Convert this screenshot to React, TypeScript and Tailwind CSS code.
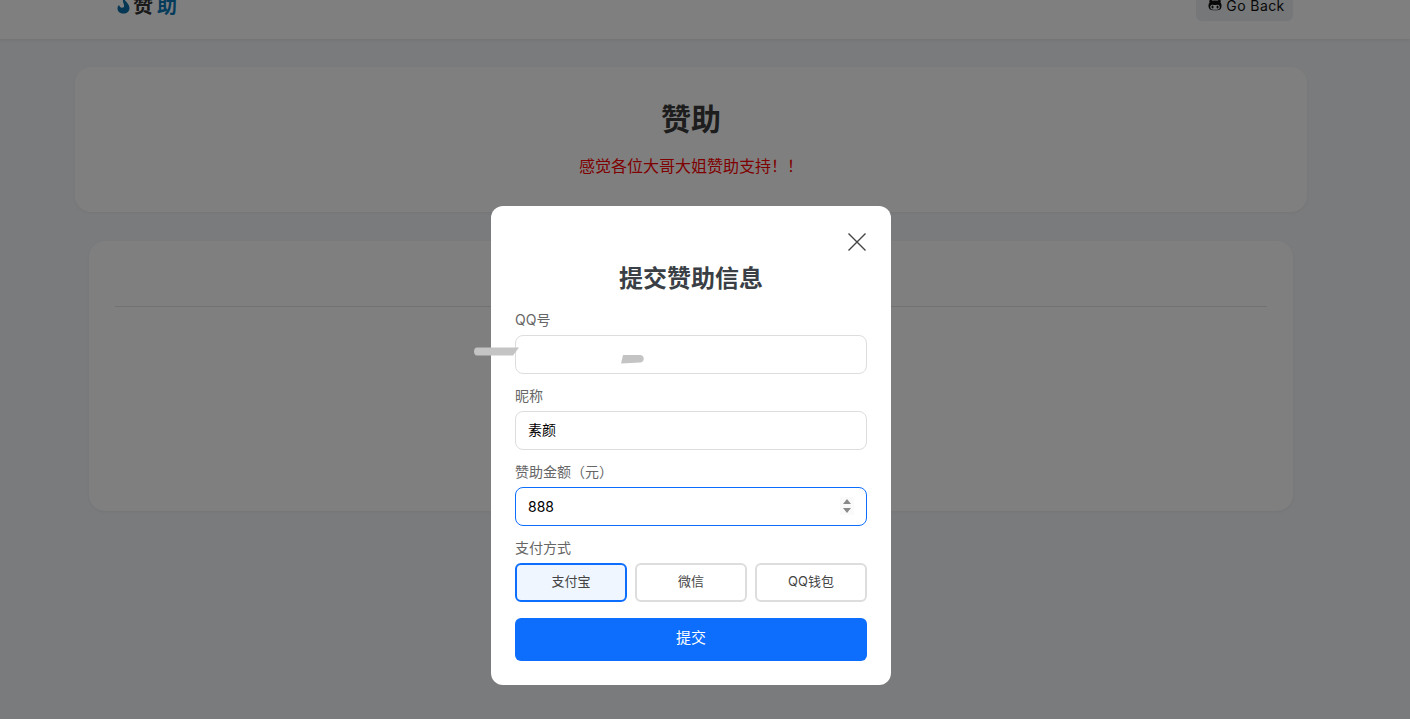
import React from 'react';
import { FaGithubAlt } from 'react-icons/fa';

const cjk = "font-['Inter','Noto_Sans_CJK_SC',sans-serif]";

const Field: React.FC<{ label: string; children: React.ReactNode }> = ({ label, children }) => (
  <div className="mb-3">
    <label className="mb-[6px] block text-[14px] leading-[19px] text-[#666]">{label}</label>
    {children}
  </div>
);

const App: React.FC = () => {
  const methods = ['支付宝', '微信', 'QQ钱包'];

  return (
    <div className={`relative h-screen overflow-hidden bg-[#f4f6fa] ${cjk}`}>
      {/* page behind the dialog, scrolled a little */}
      <nav className="-mt-[33px] flex h-[72px] items-center justify-between bg-white pl-[117px] pr-[117px] shadow-[0_1px_4px_rgba(0,0,0,0.08)]">
        <div className="flex items-center pt-[5px]">
          <svg width="13" height="16" viewBox="0 0 13 16">
            <path d="M6 0 C8 3 12.500 6 12.500 10 C12.500 13.500 10 15.500 6.500 15.500 C3 15.500 0.500 13.500 0.500 10.500 C0.500 9 1 8 2 7 C2.500 8.500 3.500 9.800 5.200 9.800 C6.800 9.800 7.300 8.500 7 7 C6.500 5 5.500 3 6 0 Z" fill="#0a6fa8" />
          </svg>
          <span className="ml-[3px] text-[20px] font-bold tracking-[4px] text-[#333]">赞</span>
          <span className="text-[20px] font-bold text-[#0a78b8]">助</span>
        </div>
        <button className="flex h-[36px] w-[97px] items-center justify-center gap-1 rounded-md bg-[#eceef0] pt-1 pl-1 text-[14px] tracking-[0.4px] text-[#111]">
          <FaGithubAlt className="text-[14px]" />
          Go Back
        </button>
      </nav>

      <main className="pt-[28px] pr-[28px]">
        <section className="mx-[75px] flex h-[145px] flex-col items-center rounded-2xl bg-white pt-[30px] shadow-[0_1px_3px_rgba(0,0,0,0.05)]">
          <h1 className="text-[30px] leading-[45px] font-bold text-[#3a3a3a]">赞助</h1>
          <p className="mt-[12px] text-[16px] leading-[24px] text-[#ff0000]">感觉各位大哥大姐赞助支持！！</p>
        </section>
        <section className="mx-[89px] mt-[29px] h-[270px] rounded-2xl bg-white px-[26px] pt-[65px] shadow-[0_1px_3px_rgba(0,0,0,0.05)]">
          <div className="h-px bg-[#e5e5e5]" />
        </section>
      </main>

      {/* overlay */}
      <div className="absolute inset-0 flex justify-center bg-black/50 pt-[206px] pr-[28px]">
        <div className="relative h-[479px] w-[400px] rounded-xl bg-white px-6 pt-[27px]">
          <div className="flex justify-end pr-px">
            <svg width="18" height="18" viewBox="0 0 18 18" fill="none" stroke="#444" strokeWidth="1.400">
              <path d="M0.500 0.500 L17.500 17.500 M17.500 0.500 L0.500 17.500" />
            </svg>
          </div>
          <h2 className="mt-3 mb-[15px] text-center text-[24px] leading-[32px] font-bold text-[#3a3f45]">提交赞助信息</h2>

          <Field label="QQ号">
            <input readOnly className="block h-[39px] w-full rounded-lg border border-[#ddd] px-3 text-[14px] outline-none" />
          </Field>
          <Field label="昵称">
            <input readOnly defaultValue="素颜" className="block h-[39px] w-full rounded-lg border border-[#ddd] px-3 pb-[3px] text-[14px] text-black outline-none" />
          </Field>
          <Field label="赞助金额（元）">
            <div className="relative">
              <input readOnly defaultValue="888" className="block h-[39px] w-full rounded-lg border border-[#0d6efd] px-3 text-[14px] text-black outline-none" />
              <svg width="14" height="18" viewBox="0 0 14 18" className="absolute top-[10px] right-[13px]">
                <rect width="14" height="18" fill="#fafafa" />
                <path d="M7 2 L11 7 L3 7 Z M3 11 L11 11 L7 16 Z" fill="#8a8a8a" />
              </svg>
            </div>
          </Field>

          <div>
            <label className="mb-[6px] block text-[14px] leading-[19px] text-[#666]">支付方式</label>
            <div className="flex gap-2">
              {methods.map((m, i) => (
                <button
                  key={m}
                  className={`h-[39px] flex-1 rounded-md border-2 pb-[2px] text-[13px] text-[#444] ${i === 0 ? 'border-[#0d6efd] bg-[#f0f6ff]' : 'border-[#ddd] bg-white'}`}
                >
                  {m}
                </button>
              ))}
            </div>
          </div>

          <button className="mt-4 h-[43px] w-full rounded-md bg-[#0d6efd] pb-[3px] text-[15px] text-white">提交</button>

          {/* scribbles over the QQ number */}
          <svg width="172" height="18" viewBox="0 0 172 18" className="absolute top-[141px] -left-[18px]">
            <path d="M4 0.500 L46 0.500 L40 8.500 L4 8.500 C0 8.500 0 0.500 4 0.500 Z" fill="#c4c4c4" />
            <path d="M150 8 L167 8 C172 8 172 15.500 167 15.500 L148 16.500 Z" fill="#c4c4c4" />
          </svg>
        </div>
      </div>
    </div>
  );
};

export default App;
